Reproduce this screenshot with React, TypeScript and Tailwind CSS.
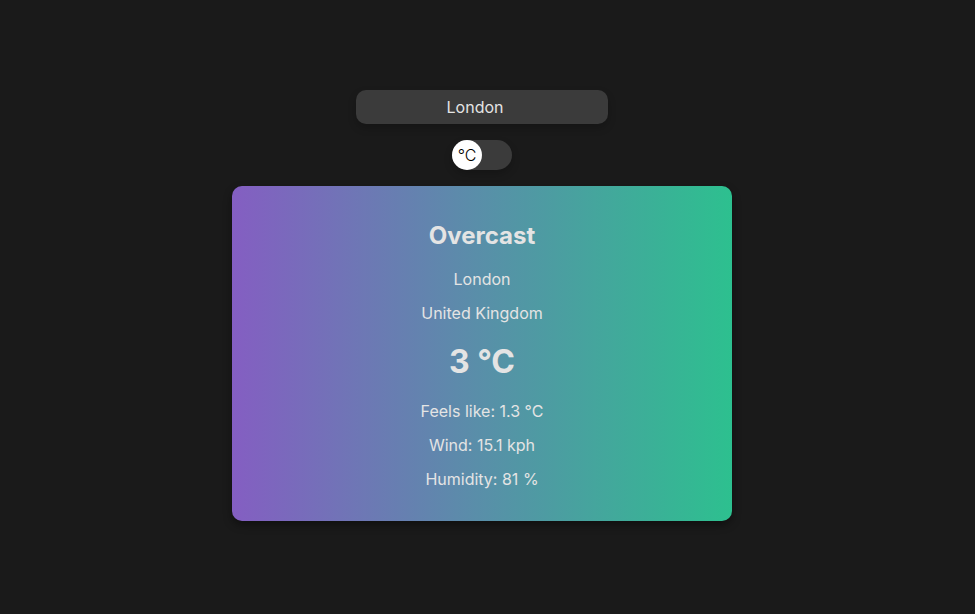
import { useState } from "react";

export default function App() {
  const [city, setCity] = useState("London");
  const [fahrenheit, setFahrenheit] = useState(false);
  const unit = fahrenheit ? "°F" : "°C";

  return (
    <div className="flex min-h-screen items-center justify-center bg-[#1a1a1a] pr-[11px] font-['Inter',sans-serif] text-base leading-6 text-[#e4e4e4]">
      <main className="flex w-full max-w-[500px] flex-col items-center gap-4 pb-[3px]">
        <input
          type="text"
          aria-label="City"
          value={city}
          onChange={(e) => setCity(e.target.value)}
          className="h-[34px] w-full max-w-[252px] rounded-[10px] bg-[#3b3b3b] pr-6 pl-2.5 text-center shadow-[0_4px_8px_rgba(0,0,0,0.2)] outline-none"
        />
        <label className="relative flex h-[30px] w-[60px] cursor-pointer rounded-full bg-[#3b3b3b] shadow-[0_4px_8px_rgba(0,0,0,0.2)]">
          <input
            type="checkbox"
            role="switch"
            aria-label="Show Fahrenheit"
            checked={fahrenheit}
            onChange={(e) => setFahrenheit(e.target.checked)}
            className="peer sr-only"
          />
          <span className="flex size-[30px] items-center justify-center rounded-full bg-white font-light text-black transition-transform peer-checked:translate-x-[30px]">
            {unit}
          </span>
        </label>
        <section className="flex w-full flex-col items-center rounded-[10px] bg-linear-to-r/srgb from-[#845ec2] to-[#2dc08f] px-6 pt-8 pb-[30px] text-center shadow-[0_4px_8px_rgba(0,0,0,0.4)]">
          <h2 className="mb-[13px] text-2xl leading-9 font-bold">Overcast</h2>
          <p className="mb-2.5">London</p>
          <p className="mb-[13px]">United Kingdom</p>
          <h1 className="mb-[13px] text-[32px] leading-12 font-bold">{fahrenheit ? 37 : 3} {unit}</h1>
          <p className="mb-2.5">Feels like: {fahrenheit ? 34.3 : 1.3} {unit}</p>
          <p className="mb-2.5">Wind: 15.1 kph</p>
          <p>Humidity: 81 %</p>
        </section>
      </main>
    </div>
  );
}
